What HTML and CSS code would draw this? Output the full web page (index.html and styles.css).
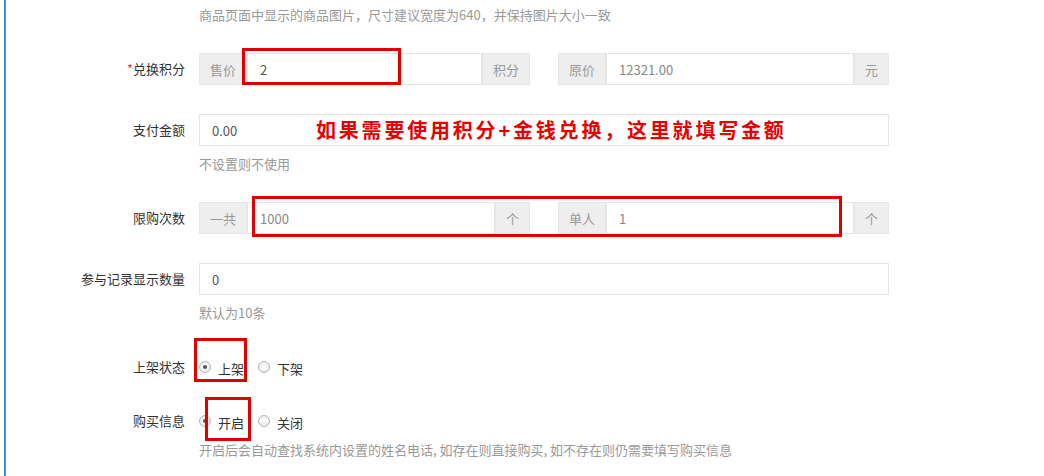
FILE: index.html
```html
<!DOCTYPE html>
<html lang="zh-CN">
<head>
    <meta charset="UTF-8">
    <meta name="viewport" content="width=device-width, initial-scale=1.0">
    <title>积分商品编辑</title>
    <link rel="stylesheet" href="styles.css">
</head>
<body>
    <div class="page">
        <!-- tail of the image field -->
        <div class="form-group first">
            <div class="control-label"></div>
            <div class="controls">
                <div class="help-block">商品页面中显示的商品图片，尺寸建议宽度为640，并保持图片大小一致</div>
            </div>
        </div>

        <div class="form-group">
            <div class="control-label"><span class="required">*</span>兑换积分</div>
            <div class="controls">
                <div class="pair">
                    <div class="input-group">
                        <span class="addon">售价</span>
                        <input class="form-control" type="text" value="2">
                        <span class="addon">积分</span>
                    </div>
                    <div class="input-group">
                        <span class="addon">原价</span>
                        <input class="form-control muted" type="text" value="12321.00">
                        <span class="addon">元</span>
                    </div>
                </div>
                <div class="mark mark-price"></div>
            </div>
        </div>

        <div class="form-group">
            <div class="control-label">支付金额</div>
            <div class="controls">
                <input class="form-control full" type="text" value="0.00">
                <div class="note">如果需要使用积分+金钱兑换，这里就填写金额</div>
                <div class="help-block spaced">不设置则不使用</div>
            </div>
        </div>

        <div class="form-group">
            <div class="control-label">限购次数</div>
            <div class="controls">
                <div class="pair">
                    <div class="input-group">
                        <span class="addon">一共</span>
                        <input class="form-control muted" type="text" value="1000">
                        <span class="addon">个</span>
                    </div>
                    <div class="input-group">
                        <span class="addon">单人</span>
                        <input class="form-control muted" type="text" value="1">
                        <span class="addon">个</span>
                    </div>
                </div>
                <div class="mark mark-limit"></div>
            </div>
        </div>

        <div class="form-group">
            <div class="control-label">参与记录显示数量</div>
            <div class="controls">
                <input class="form-control full" type="text" value="0">
                <div class="help-block spaced">默认为10条</div>
            </div>
        </div>

        <div class="form-group radio-row tight">
            <div class="control-label">上架状态</div>
            <div class="controls">
                <div class="radios">
                    <label class="radio-inline"><input type="radio" name="status" checked><span>上架</span></label>
                    <label class="radio-inline"><input type="radio" name="status"><span>下架</span></label>
                </div>
                <div class="mark mark-status"></div>
            </div>
        </div>

        <div class="form-group radio-row">
            <div class="control-label">购买信息</div>
            <div class="controls">
                <div class="radios">
                    <label class="radio-inline"><input type="radio" name="info" checked><span>开启</span></label>
                    <label class="radio-inline"><input type="radio" name="info"><span>关闭</span></label>
                </div>
                <div class="mark mark-info"></div>
                <div class="help-block near">开启后会自动查找系统内设置的姓名电话, 如存在则直接购买, 如不存在则仍需要填写购买信息</div>
            </div>
        </div>
    </div>
</body>
</html>
```

FILE: styles.css
```css
body {
    margin: 0;
    font-family: "Noto Sans CJK SC", "Liberation Sans", sans-serif;
    font-size: 13px;
    color: #333;
    background: #fff;
}

.page {
    margin-left: 4px;
    border-left: 2px solid #3a8ee6;
    min-height: 476px;
    padding-top: 6px;
    box-sizing: border-box;
}

.form-group {
    display: flex;
    margin-bottom: 29px;
}

.form-group.tight {
    margin-bottom: 22px;
}

.control-label {
    width: 193px;
    padding-right: 14px;
    box-sizing: border-box;
    text-align: right;
    line-height: 32px;
    flex-shrink: 0;
}

.required {
    color: #e4393c;
}

.controls {
    width: 690px;
    position: relative;
}

.help-block {
    color: #999;
    line-height: 18px;
}

.help-block.spaced {
    margin-top: 9px;
}

.help-block.near {
    margin-top: 4px;
}

.pair {
    display: grid;
    grid-template-columns: 331px 331px;
    column-gap: 28px;
}

.input-group {
    display: flex;
    height: 32px;
}

.addon {
    background: #eee;
    color: #999;
    padding: 0 10px;
    line-height: 32px;
    border: 1px solid #e8e8e8;
    box-sizing: border-box;
    white-space: nowrap;
}

.form-control {
    height: 32px;
    border: 1px solid #e5e5e5;
    box-sizing: border-box;
    padding: 0 12px;
    font-family: inherit;
    font-size: 13px;
    color: #555;
    background: #fff;
    min-width: 0;
    flex: 1;
    outline: none;
}

.form-control.muted {
    color: #888;
}

.form-control.full {
    display: block;
    width: 100%;
}

.radios {
    display: flex;
    align-items: center;
    height: 32px;
}

.radio-inline {
    display: flex;
    align-items: center;
    margin-right: 14px;
    font-size: 13px;
}

.radio-inline span {
    padding-top: 3px;
}

.radio-inline input {
    appearance: none;
    -webkit-appearance: none;
    width: 12px;
    height: 12px;
    margin: 0 7px 0 0;
    border: 1px solid #b5b5b5;
    border-radius: 50%;
    background: radial-gradient(circle at 50% 40%, #fff 0%, #e4e4e4 100%);
    box-sizing: border-box;
    position: relative;
}

.radio-inline input:checked::after {
    content: "";
    position: absolute;
    left: 3px;
    top: 3px;
    width: 4px;
    height: 4px;
    border-radius: 50%;
    background: #555;
}

/* annotations drawn over the form */
.note {
    position: absolute;
    left: 117px;
    top: 6px;
    font-size: 20px;
    line-height: 20px;
    font-weight: bold;
    color: #e60000;
    letter-spacing: 2.8px;
    white-space: nowrap;
}

.mark {
    position: absolute;
    border: 3px solid #e00000;
    box-sizing: border-box;
}

.mark-price {
    left: 43px;
    top: -5px;
    width: 159px;
    height: 37px;
}

.mark-limit {
    left: 53px;
    top: -6px;
    width: 590px;
    height: 41px;
}

.mark-status {
    left: -5px;
    top: -13px;
    width: 53px;
    height: 44px;
}

.mark-info {
    left: 6px;
    top: -8px;
    width: 46px;
    height: 44px;
}
```
